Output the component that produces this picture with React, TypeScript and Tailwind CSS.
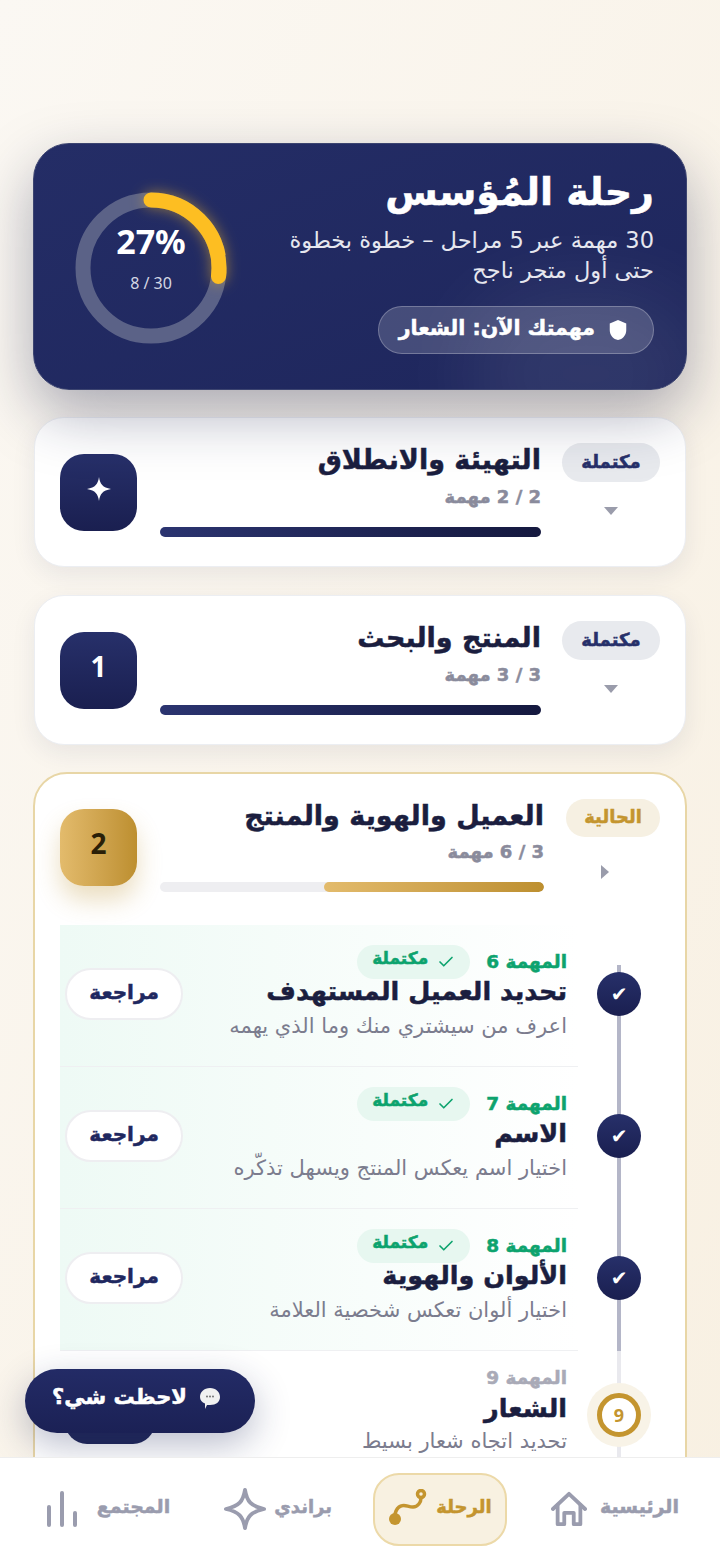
import { Check } from "lucide-react";

const font = { fontFamily: '"DejaVu Sans", sans-serif' };
const digits = { fontFamily: '"Noto Sans", sans-serif' };
const heavy = "font-bold [-webkit-text-stroke:0.5px_currentColor]";

const tasks = [
  { n: 6, title: "تحديد العميل المستهدف", desc: "اعرف من سيشتري منك وما الذي يهمه" },
  { n: 7, title: "الاسم", desc: "اختيار اسم يعكس المنتج ويسهل تذكّره" },
  { n: 8, title: "الألوان والهوية", desc: "اختيار ألوان تعكس شخصية العلامة" },
];

function Sparkle({ className }: { className?: string }) {
  return (
    <svg viewBox="0 0 24 24" className={className} fill="currentColor">
      <path d="M12 0 C13 7 15.5 10.5 24 12 C15.5 13.5 13 17 12 24 C11 17 8.5 13.5 0 12 C8.5 10.5 11 7 12 0Z" />
    </svg>
  );
}

function PhaseCard({ title, count, tile }: { title: string; count: string; tile: React.ReactNode }) {
  return (
    <div className="bg-white rounded-[30px] h-[150px] mx-[1px] pt-[25px] pr-[25px] pl-[22px] flex items-start shadow-[0_8px_24px_rgba(30,40,90,0.08)] border border-[#eceef2]">
      <div className="w-[98px] shrink-0 flex flex-col items-center">
        <span className={`h-[39px] w-[98px] rounded-full bg-[#e8eaee] text-[#27306a] text-[18px] pb-[3px] flex items-center justify-center ${heavy}`}>مكتملة</span>
        <span className="mt-[25px] w-0 h-0 border-x-[7px] border-x-transparent border-t-[8px] border-t-[#9a9cab]" />
      </div>
      <div className="w-[381px] mr-[21px] shrink-0">
        <div className={`text-[27px] leading-[34px] text-[#1b1e3f] ${heavy}`}>{title}</div>
        <div className={`text-[18px] leading-[24px] mt-[8px] text-[#8a8b9c] ${heavy}`}>{count}</div>
        <div className="h-[10px] mt-[18px] rounded-full bg-gradient-to-r from-[#2b3470] to-[#15193f]" />
      </div>
      <div className="mr-[23px] mt-[11px]">{tile}</div>
    </div>
  );
}

export default function App() {
  return (
    <div dir="rtl" style={font} className="relative w-[720px] h-[1560px] overflow-hidden bg-gradient-to-br from-[#fbf8f3] to-[#f8f0e2]">
      <div className="flex flex-col px-[33px] pt-[143px]">
        {/* hero */}
        <div className="relative z-10 h-[247px] rounded-[36px] border border-[#3c4470] bg-gradient-to-br from-[#242d66] to-[#1e265c] shadow-[0_24px_60px_rgba(24,28,70,0.35)] flex items-start justify-between pt-[22px] pr-[32px] pl-[41px] text-white overflow-hidden">
          <div className="absolute -bottom-[70px] -right-[20px] w-[240px] h-[170px] rounded-full bg-[#ffffff14] blur-2xl" />
          <div className="relative flex flex-col items-start">
            <div className={`text-[38px] leading-[52px] ${heavy}`}>رحلة المُؤسس</div>
            <div className="text-[22.5px] leading-[30px] mt-[7px] text-[#e6e7ef] w-[372px]">30 مهمة عبر 5 مراحل – خطوة بخطوة حتى أول متجر ناجح</div>
            <div className="mt-[21px] h-[48px] w-[276px] rounded-full border border-[#ffffff40] bg-[#ffffff2b] flex items-center pr-[24px] gap-[12px]">
              <svg viewBox="0 0 24 24" className="w-[22px] h-[24px] shrink-0" fill="white">
                <path d="M12 1 L21 5 V12 C21 18 17 22 12 23 C7 22 3 18 3 12 V5 Z" />
              </svg>
              <span className={`text-[20.5px] whitespace-nowrap pb-[4px] ${heavy}`}>مهمتك الآن: الشعار</span>
            </div>
          </div>
          <div dir="ltr" className="relative w-[152px] h-[152px] mt-[26px] shrink-0">
            <svg viewBox="0 0 152 152" className="w-full h-full overflow-visible">
              <circle cx="76" cy="76" r="68" fill="none" stroke="#5b6287" strokeWidth="15" />
              <circle cx="76" cy="76" r="68" fill="none" stroke="#fdbe22" strokeWidth="15" strokeLinecap="round" pathLength="100" strokeDasharray="27 73" transform="rotate(-90 76 76)" className="[filter:drop-shadow(0_0_7px_rgba(253,190,34,0.5))]" />
            </svg>
            <div className="absolute inset-0 flex flex-col items-center pt-[28px]" style={digits}>
              <span className="text-[34px] leading-[42px] font-bold">27%</span>
              <span className="text-[16px] leading-[20px] mt-[11px] text-[#d5d7e4]">8 / 30</span>
            </div>
          </div>
        </div>

        <div className="flex flex-col gap-[28px] mt-[27px]">
          <PhaseCard
            title="التهيئة والانطلاق"
            count="2 / 2 مهمة"
            tile={
              <div className="w-[77px] h-[77px] rounded-[24px] bg-gradient-to-b from-[#27306a] to-[#1a1f50] flex items-center justify-center pb-[8px] text-white">
                <Sparkle className="w-[24px] h-[24px]" />
              </div>
            }
          />
          <PhaseCard
            title="المنتج والبحث"
            count="3 / 3 مهمة"
            tile={
              <div className="w-[77px] h-[77px] rounded-[24px] bg-gradient-to-b from-[#27306a] to-[#1a1f50] flex items-center justify-center pb-[10px] text-white text-[28px] font-bold" style={digits}>1</div>
            }
          />

          {/* current phase */}
          <div className="bg-white rounded-t-[34px] border-2 border-[#e8d6a6] mt-[-1px] h-[700px] pr-[25px] pl-[25px] pt-[25px]">
            <div className="flex items-start h-[126px]">
              <div className="w-[94px] shrink-0 flex flex-col items-center">
                <span className={`h-[38px] w-[94px] rounded-full bg-[#f6f0e2] text-[#c4952f] text-[18px] pb-[3px] flex items-center justify-center ${heavy}`}>الحالية</span>
                <span className="mt-[28px] mr-[16px] w-0 h-0 border-y-[7px] border-y-transparent border-l-[8px] border-l-[#9a9cab]" />
              </div>
              <div className="w-[384px] mr-[22px] shrink-0">
                <div className={`text-[27px] leading-[34px] text-[#1b1e3f] ${heavy}`}>العميل والهوية والمنتج</div>
                <div className={`text-[18px] leading-[24px] mt-[7px] text-[#8a8b9c] ${heavy}`}>3 / 6 مهمة</div>
                <div className="h-[10px] mt-[18px] rounded-full bg-[#eeeef1] overflow-hidden">
                  <div className="h-full w-[220px] rounded-full bg-gradient-to-l from-[#bd8f2f] to-[#e3bb6c]" />
                </div>
              </div>
              <div className="mr-[23px] mt-[10px] w-[77px] h-[77px] rounded-[24px] bg-gradient-to-l from-[#bd8f2f] to-[#e3bb6c] flex items-center justify-center pb-[10px] text-[#2a1f08] text-[28px] font-bold shadow-[0_14px_24px_rgba(190,145,50,0.3)]" style={digits}>2</div>
            </div>

            <div className="flex flex-col">
              {tasks.map((t, i) => (
                <div key={t.n} className="flex items-stretch h-[142px]">
                  <div className="relative w-[82px] shrink-0">
                    <span className={`absolute right-[39px] w-[4px] bg-[#b4b6c8] bottom-0 ${i === 0 ? "top-[40px]" : "top-0"}`} />
                    <span className="absolute right-[19px] top-[47px] w-[44px] h-[44px] rounded-full bg-gradient-to-b from-[#27306a] to-[#1a1f50] flex items-center justify-center text-white text-[20px] font-bold">✔</span>
                  </div>
                  <div className="flex-1 flex items-start justify-between border-b border-[#eff0f2] bg-gradient-to-l from-white to-[#eefaf5] pr-[11px] pl-[5px]">
                    <div className="pt-[20px]">
                      <div className="flex items-center gap-[16px] h-[34px]">
                        <span className={`text-[#0da36e] text-[18.5px] ${heavy}`}>المهمة {t.n}</span>
                        <span className={`h-[34px] px-[15px] rounded-full bg-[#e7f7f0] text-[#0da36e] text-[17px] flex items-center gap-[9px] ${heavy}`}>
                          <Check className="w-[18px] h-[18px] shrink-0" strokeWidth={2.2} />
                          <span className="mb-[7px]">مكتملة</span>
                        </span>
                      </div>
                      <div className={`text-[25.5px] leading-[32px] text-[#1b1e3f] mt-[-4px] ${heavy}`}>{t.title}</div>
                      <div className="text-[21px] leading-[26px] mt-[6px] text-[#7b7c8e]">{t.desc}</div>
                    </div>
                    <div className={`mt-[43px] w-[118px] h-[52px] rounded-full bg-white border-2 border-[#eeeef1] text-[#1f2860] text-[20px] pb-[5px] flex items-center justify-center ${heavy}`}>مراجعة</div>
                  </div>
                </div>
              ))}
              <div className="flex items-stretch h-[143px]">
                <div className="relative w-[82px] shrink-0">
                  <span className="absolute right-[39px] w-[4px] bg-[#e9e9ee] inset-y-0" />
                  <span className="absolute right-[9px] top-[32px] w-[64px] h-[64px] rounded-full bg-[#f8f3e7] flex items-center justify-center">
                    <span className="w-[44px] h-[44px] rounded-full bg-white border-[5px] border-[#c4952f] text-[#c4952f] text-[18px] font-bold flex items-center justify-center" style={digits}>9</span>
                  </span>
                </div>
                <div className="flex-1 pr-[11px] pt-[13px]">
                  <div className={`text-[18.5px] leading-[28px] text-[#a9aab7] ${heavy}`}>المهمة 9</div>
                  <div className={`text-[25.5px] leading-[32px] text-[#1b1e3f] ${heavy}`}>الشعار</div>
                  <div className="text-[21px] leading-[26px] mt-[4px] text-[#7b7c8e]">تحديد اتجاه شعار بسيط</div>
                </div>
              </div>
            </div>
          </div>
        </div>
      </div>

      {/* feedback pill */}
      <div className={`absolute left-[25px] top-[1369px] w-[230px] h-[64px] rounded-full bg-gradient-to-b from-[#232b66] to-[#1b2155] flex items-center justify-center gap-[11px] pb-[6px] pr-[6px] text-white text-[21px] shadow-[0_12px_36px_rgba(30,40,90,0.3)] z-20 ${heavy}`}>
        <svg viewBox="0 0 24 24" className="w-[24px] h-[24px] shrink-0">
          <path d="M12 2 C18 2 22 6 22 11 C22 16 18 19 12 19 L9 19 L7 23 L7 17.5 C4 16.5 2 14 2 11 C2 6 6 2 12 2Z" fill="#f1f1f1" />
          <circle cx="9" cy="10.5" r="0.9" fill="#666" /><circle cx="12" cy="10.5" r="0.9" fill="#666" /><circle cx="15" cy="10.5" r="0.9" fill="#666" />
        </svg>
        <span>لاحظت شي؟</span>
      </div>
      <div className="absolute left-[65px] top-[1420px] w-[90px] h-[24px] rounded-b-[22px] bg-[#1f2658] z-10" />

      {/* bottom nav */}
      <div className="absolute bottom-0 inset-x-0 h-[103px] bg-white border-t border-[#eeeeee] flex items-center z-30 pr-[41px]">
        <div className={`flex items-center gap-[13px] text-[#9a9cae] text-[19px] ${heavy}`}>
          <span className="pb-[6px]">الرئيسية</span>
          <svg viewBox="0 0 38 38" className="w-[36px] h-[38px] shrink-0" fill="none" stroke="currentColor" strokeWidth="4" strokeLinejoin="round" strokeLinecap="round">
            <path d="M2 19 L19 3 L36 19" />
            <path d="M7 15 V35 H14 V23 H24 V35 H31 V15" />
          </svg>
        </div>
        <div className={`mr-[44px] w-[134px] h-[73px] rounded-[26px] bg-[#f8f1e1] border-2 border-[#ecd9a8] flex items-center justify-center gap-[8px] text-[#c4952f] text-[18px] ${heavy}`}>
          <span className="pb-[6px]">الرحلة</span>
          <svg viewBox="0 0 40 40" className="w-[40px] h-[40px] shrink-0" fill="none" stroke="currentColor" strokeWidth="3.5" strokeLinecap="round">
            <circle cx="33" cy="5" r="3.5" />
            <path d="M33 9 C33 13 30 18 25 18 C20 18 17 15 13 17 C10 18 8 21 7 25" />
            <circle cx="7" cy="30" r="6" fill="currentColor" stroke="none" />
          </svg>
        </div>
        <div className={`mr-[41px] flex items-center gap-[8px] text-[#9a9cae] text-[18px] ${heavy}`}>
          <span className="pb-[6px]">براندي</span>
          <svg viewBox="0 0 44 44" className="w-[42px] h-[42px] shrink-0" fill="none" stroke="currentColor" strokeWidth="4" strokeLinejoin="round">
            <path d="M22 2 C24 14 28 19 42 22 C28 25 24 30 22 42 C20 30 16 25 2 22 C16 19 20 14 22 2Z" />
          </svg>
        </div>
        <div className={`mr-[54px] flex items-center gap-[19px] text-[#9a9cae] text-[19px] ${heavy}`}>
          <span className="pb-[6px]">المجتمع</span>
          <svg viewBox="0 0 32 36" className="w-[32px] h-[36px] shrink-0" fill="none" stroke="currentColor" strokeWidth="4" strokeLinecap="round">
            <path d="M3 16 V34" />
            <path d="M16 2 V34" />
            <path d="M29 22 V34" />
          </svg>
        </div>
      </div>
    </div>
  );
}
